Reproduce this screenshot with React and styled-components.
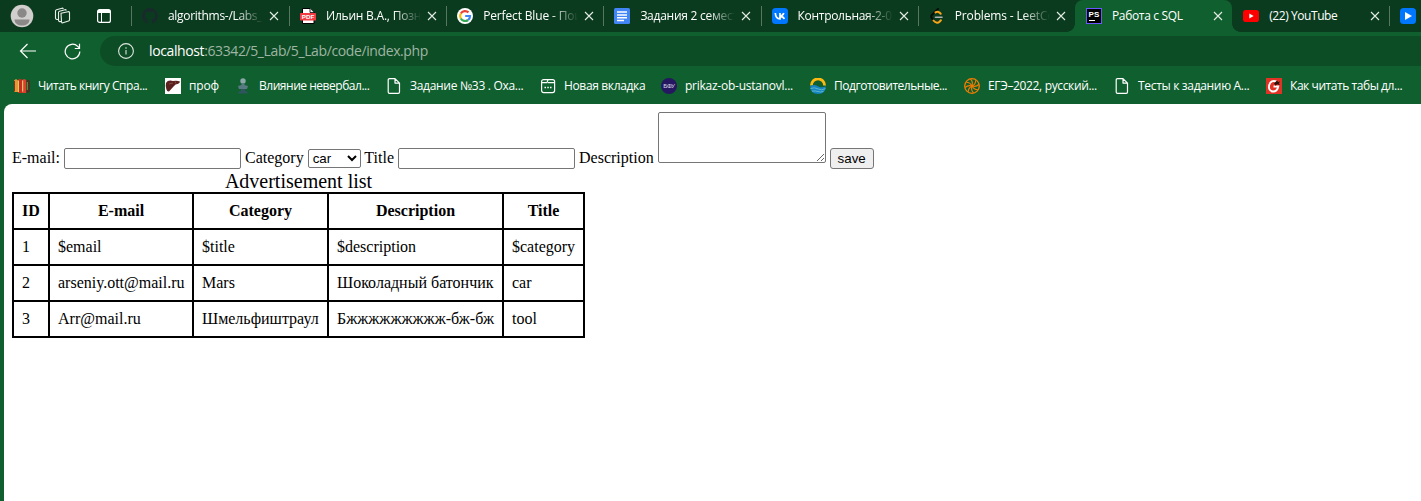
import React from "react";
import styled, { createGlobalStyle, css } from "styled-components";

const GlobalStyle = createGlobalStyle`
  body { margin: 0; background: #10602f; overflow: hidden; }
  * { box-sizing: border-box; }
`;

const Browser = styled.div`
  display: flex;
  flex-direction: column;
  width: 1421px;
  height: 501px;
  overflow: hidden;
  background: #10602f;
  color: #fff;
  font: 12px/16px "Open Sans", "Noto Sans", sans-serif;
  svg { display: block; flex: none; }
`;

const TabStrip = styled.div`
  display: flex;
  flex: none;
  height: 32px;
  background: #0b3b1e;
`;

const StripTools = styled.div`
  display: flex;
  align-items: center;
  flex: none;
  width: 131px;
  padding-left: 10px;
  gap: 19px;
`;

const TabActionsButton = styled.span`
  display: flex;
  margin-left: 7px;
`;

const Tab = styled.div`
  position: relative;
  display: flex;
  align-items: center;
  flex: none;
  width: ${(p) => p.$width || 157.2}px;
  height: 32px;
  padding-left: 11px;
  ${(p) => p.$line && css`
    &::before {
      content: "";
      position: absolute;
      left: 0;
      top: 6px;
      width: 1px;
      height: 20px;
      background: #58775f;
    }
  `}
  ${(p) => p.$active && css`
    background: #10602f;
    border-radius: 8px 8px 0 0;
    &::before, &::after {
      content: "";
      position: absolute;
      bottom: 0;
      width: 8px;
      height: 8px;
    }
    &::before {
      left: -8px;
      background: radial-gradient(circle at 0 0, transparent 7.5px, #10602f 8px);
    }
    &::after {
      right: -8px;
      background: radial-gradient(circle at 100% 0, transparent 7.5px, #10602f 8px);
    }
  `}
`;

const TabLabel = styled.span`
  width: 95px;
  margin-left: 10px;
  margin-right: 6px;
  overflow: hidden;
  white-space: nowrap;
  letter-spacing: ${(p) => p.$spacing || 0}px;
  ${(p) => p.$fade && css`
    mask-image: linear-gradient(to right, #000 68px, transparent 95px);
  `}
`;

const Toolbar = styled.div`
  display: flex;
  align-items: center;
  flex: none;
  height: 38px;
  padding: 0 0 0 19px;
`;

const NavButton = styled.span`
  display: flex;
  margin-right: ${(p) => p.$after}px;
`;

const AddressBar = styled.div`
  display: flex;
  align-items: center;
  flex: 1;
  height: 30px;
  padding-left: 18px;
  border-radius: 15px 0 0 15px;
  background: #0d4d25;
`;

const Url = styled.span`
  margin-left: 15px;
  font-size: 14px;
  line-height: 20px;
  letter-spacing: ${(p) => p.$spacing}px;
  color: #9eb5a4;
  b { font-weight: 400; color: #fff; }
`;

const Bookmarks = styled.div`
  display: flex;
  align-items: center;
  flex: none;
  height: 34px;
  padding: 0 0 2px 14px;
`;

const Bookmark = styled.div`
  display: flex;
  align-items: center;
  flex: none;
  gap: 8px;
  width: ${(p) => p.$width}px;
  white-space: nowrap;
  letter-spacing: ${(p) => p.$spacing || 0}px;
`;

const Page = styled.main`
  flex: 1;
  margin-left: 4px;
  padding: 8px;
  border-radius: 8px 0 0 0;
  background: #fff;
  color: #000;
  font: 16px/18px "Liberation Serif", serif;
`;

const AdForm = styled.form`
  height: 58px;
  white-space: nowrap;
`;

const control = css`
  margin: 0;
  border: 1px solid #767676;
  border-radius: 2px;
  background: #fff;
  color: #000;
  font: 13.333px "Liberation Sans", sans-serif;
  outline: none;
`;

const TextInput = styled.input`
  ${control}
  width: 177px;
  height: 21px;
  padding: 1px 2px;
`;

const CategorySelect = styled.select`
  ${control}
  width: 53px;
  height: 19px;
`;

const DescriptionArea = styled.textarea`
  ${control}
  width: 168px;
  height: 51px;
  padding: 2px;
  resize: both;
`;

const SaveButton = styled.button`
  ${control}
  width: 44px;
  height: 21px;
  padding: 1px 6px;
  border-radius: 3px;
  background: #efefef;
`;

const AdTable = styled.table`
  width: 573px;
  table-layout: fixed;
  border-collapse: collapse;
  font-size: 16px;
  caption { font-size: 20px; line-height: 22px; }
`;

const cell = css`
  padding: 8px;
  border: 2px solid #000;
  line-height: 18px;
  white-space: nowrap;
`;
const HeadCell = styled.th`${cell} width: ${(p) => p.$width}px;`;
const Cell = styled.td`${cell}`;

const Close = () => (
  <svg width="10" height="10" viewBox="0 0 10 10" stroke="#e4ece6" strokeWidth="1.1">
    <path d="M1 1l8 8M9 1L1 9" />
  </svg>
);

const Icon = ({ children, ...rest }) => (
  <svg width="16" height="16" viewBox="0 0 16 16" fill="none" {...rest}>{children}</svg>
);

const Avatar = () => (
  <svg width="24" height="24" viewBox="0 0 24 24">
    <circle cx="12" cy="12" r="11.3" fill="#d0cfcd" />
    <circle cx="12" cy="9" r="4.7" fill="#8b8987" />
    <path d="M4.5 15.5h15c0 4-3.7 6-7.5 6s-7.500-2-7.500-6z" fill="#8b8987" />
  </svg>
);

const Workspaces = () => (
  <svg width="18" height="18" viewBox="0 0 18 18" fill="none" stroke="#e8efea" strokeWidth="1.1" strokeLinejoin="round">
    <path d="M8 6.300l7-1.600q1.300-.2 1.500 1v7q0 1-1 1.300l-5.500 1.800q-1.400.4-1.500-1z" />
    <path d="M8.500 14.500q-3 .6-3-1.500V5.500q0-1 1-1.300L12 2.700q1-.2 1.300.8" />
    <path d="M5.500 12.500q-3 .2-3-1.500V4q0-1 1-1.300L9 1.200q1-.2 1.300.8" />
  </svg>
);

const TabActions = () => (
  <svg width="14" height="14" viewBox="0 0 14 14">
    <rect x=".6" y=".6" width="12.800" height="12.800" rx="2" fill="none" stroke="#fff" strokeWidth="1.200" />
    <path d="M1 1h12v3H1z" fill="#fff" />
    <path d="M4.500 4v9" stroke="#fff" />
  </svg>
);

const GitHub = () => (
  <Icon>
    <path fill="#192a2c" d="M8 0a8 8 0 0 0-2.500 15.600c.4.100.5-.2.5-.4V13.800c-2.200.5-2.700-1-2.700-1-.4-.9-.9-1.200-.9-1.200-.7-.5.1-.5.1-.5.8.1 1.200.8 1.200.8.7 1.300 1.900.9 2.400.7 0-.5.300-.9.500-1.100-1.800-.2-3.600-.9-3.600-4 0-.9.3-1.600.8-2.100-.1-.2-.4-1 .1-2.100 0 0 .7-.2 2.200.8a7.600 7.600 0 0 1 4 0c1.500-1 2.200-.8 2.200-.8.4 1.100.2 1.900.1 2.100.5.6.8 1.300.8 2.100 0 3.100-1.900 3.700-3.700 3.900.3.300.6.800.6 1.500v2.200c0 .2.100.5.500.4A8 8 0 0 0 8 0z" />
  </Icon>
);

const badge = { fontFamily: "Liberation Sans, sans-serif", fontWeight: 700, textAnchor: "middle" };

const Pdf = () => (
  <Icon>
    <path d="M2.500.5h7.500L14 4.500v11H2.500z" fill="#fff" stroke="#000" />
    <path d="M10 .5v4h4" fill="#eee" stroke="#000" strokeWidth=".8" />
    <rect x="0" y="5" width="16" height="7.500" rx=".7" fill="#f23a42" />
    <text {...badge} x="8" y="11" fontSize="6.200" fill="#fff">PDF</text>
  </Icon>
);

const Google = () => (
  <Icon>
    <circle cx="8" cy="8" r="8" fill="#fff" />
    <g strokeWidth="2.200">
      <path d="M3.800 5.500A5 5 0 0 1 11.500 4.400" stroke="#ea4335" />
      <path d="M3.800 5.500a5 5 0 0 0 0 5" stroke="#fbbc05" />
      <path d="M3.800 10.500a5 5 0 0 0 7.300 1.500" stroke="#34a853" />
      <path d="M8.200 8H13a5 5 0 0 1-1.900 4" stroke="#4285f4" />
    </g>
  </Icon>
);

const Docs = () => (
  <Icon>
    <rect width="16" height="16" rx="1.500" fill="#4285f4" />
    <path d="M3 4h10M3 7h10M3 9.800h10M3 12.600h7" stroke="#fff" strokeWidth="1.500" />
  </Icon>
);

const Vk = () => (
  <Icon>
    <rect width="16" height="16" rx="3.500" fill="#07f" />
    <path d="M3.300 5c.2 3.600 2 5.800 4.700 5.800V5M8 8.100c2-.2 3.300-1.500 3.800-3.100M8 8.100c2.200.1 3.600 1.200 4.300 2.900" stroke="#fff" strokeWidth="1.700" />
  </Icon>
);

const LeetCode = () => (
  <Icon strokeWidth="2" strokeLinecap="round">
    <path d="M9 1L3.300 6.500q-1.600 1.500-.8 3.300l2 2.400" stroke="#050d08" />
    <path d="M6.500 4.400q2-1.200 4 .2l1.200 1.200" stroke="#f9a51a" />
    <path d="M4.500 12.500q1.500 2 3.400 2.200 1.500.1 2.600-1l1.400-1.500" stroke="#f9a51a" />
    <path d="M6.500 9.200H13" stroke="#b3b3b3" strokeWidth="1.600" />
  </Icon>
);

const PhpStorm = () => (
  <Icon>
    <rect x=".5" y=".5" width="15" height="15" fill="#000" stroke="#6b57ff" />
    <text {...badge} x="7.900" y="8.800" fontSize="8" fill="#fff">PS</text>
    <path d="M3 12.500h6" stroke="#fff" />
  </Icon>
);

const YouTube = () => (
  <Icon>
    <rect y="2" width="16" height="12" rx="2.800" fill="#f00" />
    <path d="M6.300 5.500v5l4.400-2.500z" fill="#fff" />
  </Icon>
);

const VkVideo = () => (
  <Icon>
    <rect width="16" height="16" rx="3.500" fill="#07f" />
    <path d="M5 4v8l7-4z" fill="#fff" />
  </Icon>
);

const Books = () => (
  <Icon>
    <path d="M0 2.500l2-1.500 2 1.500V14H0z" fill="#e09a35" />
    <path d="M.5 3v10.500" stroke="#8b321b" />
    <path d="M4 2l2-1.500L8 2v13H4z" fill="#c4301f" />
    <path d="M4.500 2.500v11.500" stroke="#e3cc5c" />
    <path d="M8 2l2-1 2.300 1v13H8z" fill="#d9402d" />
    <path d="M8.700 2.500v11" stroke="#f0db78" />
    <path d="M12.300 2.500l2-.7 1.700 1V14l-3.700 1z" fill="#443422" />
    <path d="M13.300 4v8" stroke="#6d9b44" />
  </Icon>
);

const Liver = () => (
  <Icon>
    <path d="M0 0h16v16H0z" fill="#fff" />
    <path d="M1 5q2-3.500 7-2 4-1 7.300.7l-2 2q-3 0-5 3l-4.300 4.800q-2 .3-2.700-2.500Q.3 8 1 5z" fill="#5b211e" />
    <path d="M4 6l4-1M10 3.500l1 2" stroke="#9a6059" strokeWidth=".7" />
  </Icon>
);

const Person = () => (
  <Icon>
    <circle cx="8" cy="3" r="2.700" fill="#8ba7a9" />
    <path d="M6.500 5h3v2l3.500 1-1 3H4L3 8l3.500-1z" fill="#587a82" />
    <path d="M6 11h4v2l3 1-1 1.500H4L3 14l3-1z" fill="#305461" />
  </Icon>
);

const File = () => (
  <Icon stroke="#fff" strokeWidth="1.200" strokeLinejoin="round">
    <path d="M3.500.6H9L13.500 5.100V14a1.300 1.300 0 0 1-1.300 1.300H3.500A1.300 1.300 0 0 1 2.200 14V1.900A1.300 1.300 0 0 1 3.500.6zM9 .6V5.100h4.500" />
  </Icon>
);

const NewTab = () => (
  <Icon stroke="#fff" strokeWidth="1.200">
    <rect x="1.600" y="1.600" width="13" height="13" rx="2" />
    <path d="M2 4.600h5l1-3M8 4.600h6.500" />
    <path d="M4.500 9.500H6M7.300 9.500h1.500M10 9.500h1.500" strokeWidth="1.500" />
  </Icon>
);

const Bfu = () => (
  <Icon>
    <circle cx="8" cy="8" r="8" fill="#251760" />
    <text {...badge} x="8" y="10.300" fontSize="6.200" fontWeight="400" fill="#dad8e8">БФУ</text>
  </Icon>
);

const Sunrise = () => (
  <Icon>
    <path d="M1.400 7.500a6.600 6.600 0 0 1 13.200 0" stroke="#fdb913" strokeWidth="2.800" />
    <path d="M.2 8q4-2 8 .4 4 2 7.600-.2-.2 7.800-7.800 7.800T.2 8z" fill="#1684c4" />
    <path d="M.5 10.500q4-1.500 7.500.4t7.500-.2M2 13.200q3.200-.8 6 .3t5.500-.1" stroke="#63bdc6" strokeWidth=".9" />
  </Icon>
);

const Wheel = () => (
  <Icon stroke="#f57c00">
    <circle cx="8" cy="8" r="7.300" strokeWidth="1.300" />
    {[0, 45, 90, 135, 180, 225, 270, 315].map((a) => (
      <path key={a} d="M8 8Q9.300 4 6.500 1.200" transform={`rotate(${a} 8 8)`} strokeWidth="1.100" />
    ))}
  </Icon>
);

const Guitar = () => (
  <Icon>
    <path d="M0 0h16v16H0z" fill="#e03326" />
    <path d="M10.500 3.500Q5 1.500 3.200 7 2 12.500 6.700 13.500q4.700.2 5.500-5H7.500" stroke="#fff" strokeWidth="1.900" />
    <path d="M8 5.500l3-3 1 1.500 2-.5-1.200 2L14 7l-3-.8-1.300 1.500z" fill="#24150f" />
  </Icon>
);

const Clipped = () => (
  <Icon><path d="M1 8l3-1.500v3z" fill="#b5a52b" /></Icon>
);

const tabs = [
  { icon: <GitHub />, label: "algorithms-/Labs_", fade: true, line: true, spacing: -0.3, width: 158 },
  { icon: <Pdf />, label: "Ильин В.А., Позн", fade: true, line: true, spacing: -0.22 },
  { icon: <Google />, label: "Perfect Blue - Пои", fade: true, line: true, spacing: -0.15 },
  { icon: <Docs />, label: "Задания 2 семест", fade: true, line: true, spacing: -0.25 },
  { icon: <Vk />, label: "Контрольная-2-0", fade: true, line: true, spacing: -0.3 },
  { icon: <LeetCode />, label: "Problems - LeetCo", fade: true, line: true, spacing: -0.15 },
  { icon: <PhpStorm />, label: "Работа с SQL", active: true, spacing: -0.33 },
  { icon: <YouTube />, label: "(22) YouTube", spacing: -0.42 },
];

const bookmarks = [
  { icon: <Books />, label: "Читать книгу Спра...", width: 151, spacing: -0.45 },
  { icon: <Liver />, label: "проф", width: 70, spacing: -0.2 },
  { icon: <Person />, label: "Влияние невербал...", width: 151, spacing: -0.47 },
  { icon: <File />, label: "Задание №33 . Оха...", width: 154, spacing: -0.3 },
  { icon: <NewTab />, label: "Новая вкладка", width: 121, spacing: -0.35 },
  { icon: <Bfu />, label: "prikaz-ob-ustanovl...", width: 149, spacing: -0.25 },
  { icon: <Sunrise />, label: "Подготовительные...", width: 154, spacing: -0.47 },
  { icon: <Wheel />, label: "ЕГЭ–2022, русский...", width: 150, spacing: -0.35 },
  { icon: <File />, label: "Тесты к заданию А...", width: 152, spacing: -0.32 },
  { icon: <Guitar />, label: "Как читать табы дл...", width: 154, spacing: -0.44 },
  { icon: <Clipped />, label: "", width: 16 },
];

const columns = [["ID", 36], ["E-mail", 144], ["Category", 135], ["Description", 175], ["Title", 81]];

const ads = [
  ["1", "$email", "$title", "$description", "$category"],
  ["2", "arseniy.ott@mail.ru", "Mars", "Шоколадный батончик", "car"],
  ["3", "Arr@mail.ru", "Шмельфиштраул", "Бжжжжжжжжж-бж-бж", "tool"],
];

export default function App() {
  return (
    <Browser>
      <GlobalStyle />
      <TabStrip>
        <StripTools>
          <Avatar />
          <Workspaces />
          <TabActionsButton><TabActions /></TabActionsButton>
        </StripTools>
        {tabs.map((t) => (
          <Tab key={t.label} $line={t.line} $active={t.active} $width={t.width}>
            {t.icon}
            <TabLabel $fade={t.fade} $spacing={t.spacing}>{t.label}</TabLabel>
            <Close />
          </Tab>
        ))}
        <Tab $line><VkVideo /></Tab>
      </TabStrip>
      <Toolbar>
        <NavButton $after={27}>
          <svg width="18" height="16" viewBox="0 0 18 16" fill="none" stroke="#fff" strokeWidth="1.200">
            <path d="M17 8H1.500M8.500 1L1.500 8l7 7" />
          </svg>
        </NavButton>
        <NavButton $after={19}>
          <svg width="17" height="17" viewBox="0 0 17 17" fill="none" stroke="#fff" strokeWidth="1.200">
            <path d="M15.800 8.500A7.300 7.300 0 1 1 13.700 3.400L15.500 5.200M15.500.8v4.700h-4.700" />
          </svg>
        </NavButton>
        <AddressBar>
          <Icon stroke="#dfe8e1" strokeWidth="1.100">
            <circle cx="8" cy="8" r="7.400" />
            <path d="M8 7v4.500M8 4.300v1.400" />
          </Icon>
          <Url $spacing={-0.39}><b>localhost</b>:63342/5_Lab/5_Lab/code/index.php</Url>
        </AddressBar>
      </Toolbar>
      <Bookmarks>
        {bookmarks.map((b, i) => (
          <Bookmark key={i} $width={b.width} $spacing={b.spacing}>{b.icon}{b.label}</Bookmark>
        ))}
      </Bookmarks>
      <Page>
        <AdForm>
          E-mail: <TextInput /> Category{" "}
          <CategorySelect defaultValue="car"><option>car</option><option>tool</option></CategorySelect>{" "}
          Title <TextInput /> Description <DescriptionArea />{" "}
          <SaveButton type="button">save</SaveButton>
        </AdForm>
        <AdTable>
          <caption>Advertisement list</caption>
          <thead>
            <tr>{columns.map(([name, w]) => <HeadCell key={name} $width={w}>{name}</HeadCell>)}</tr>
          </thead>
          <tbody>
            {ads.map((row) => <tr key={row[0]}>{row.map((v) => <Cell key={v}>{v}</Cell>)}</tr>)}
          </tbody>
        </AdTable>
      </Page>
    </Browser>
  );
}
